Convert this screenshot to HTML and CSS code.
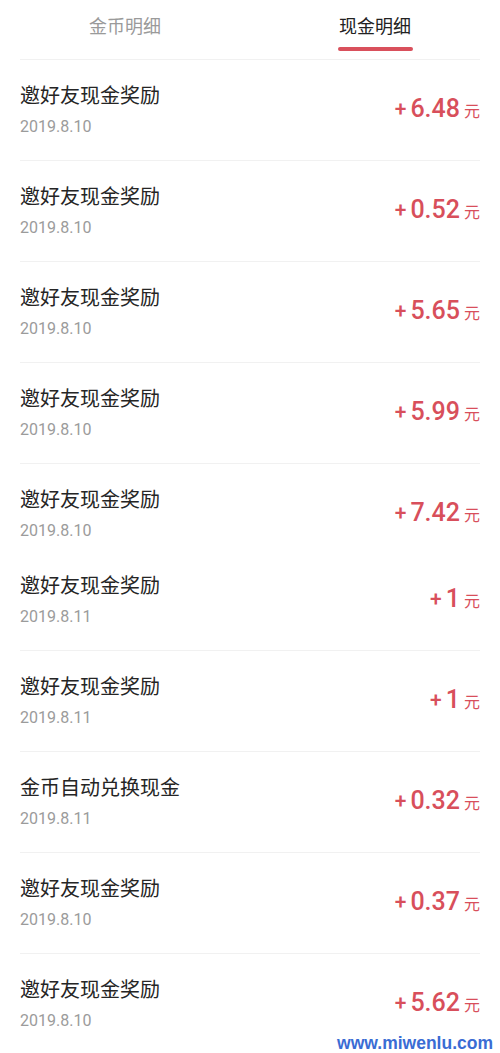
FILE: index.html
```html
<!DOCTYPE html>
<html lang="zh-CN">
<head>
  <meta charset="UTF-8" />
  <meta name="viewport" content="width=device-width, initial-scale=1.0" />
  <title>现金明细</title>
  <link rel="stylesheet" href="styles.css">
</head>
<body>
  <div class="tabs">
    <div class="tab">金币明细</div>
    <div class="tab active">现金明细</div>
  </div>

  <ul class="list">
    <li class="row">
      <div class="info">
        <div class="title">邀好友现金奖励</div>
        <div class="date">2019.8.10</div>
      </div>
      <div class="amount"><span class="plus">+</span>6.48<span class="unit">元</span></div>
    </li>
    <li class="row">
      <div class="info">
        <div class="title">邀好友现金奖励</div>
        <div class="date">2019.8.10</div>
      </div>
      <div class="amount"><span class="plus">+</span>0.52<span class="unit">元</span></div>
    </li>
    <li class="row">
      <div class="info">
        <div class="title">邀好友现金奖励</div>
        <div class="date">2019.8.10</div>
      </div>
      <div class="amount"><span class="plus">+</span>5.65<span class="unit">元</span></div>
    </li>
    <li class="row">
      <div class="info">
        <div class="title">邀好友现金奖励</div>
        <div class="date">2019.8.10</div>
      </div>
      <div class="amount"><span class="plus">+</span>5.99<span class="unit">元</span></div>
    </li>
    <li class="row short">
      <div class="info">
        <div class="title">邀好友现金奖励</div>
        <div class="date">2019.8.10</div>
      </div>
      <div class="amount"><span class="plus">+</span>7.42<span class="unit">元</span></div>
    </li>
    <li class="row">
      <div class="info">
        <div class="title">邀好友现金奖励</div>
        <div class="date">2019.8.11</div>
      </div>
      <div class="amount"><span class="plus">+</span>1<span class="unit">元</span></div>
    </li>
    <li class="row">
      <div class="info">
        <div class="title">邀好友现金奖励</div>
        <div class="date">2019.8.11</div>
      </div>
      <div class="amount"><span class="plus">+</span>1<span class="unit">元</span></div>
    </li>
    <li class="row">
      <div class="info">
        <div class="title">金币自动兑换现金</div>
        <div class="date">2019.8.11</div>
      </div>
      <div class="amount"><span class="plus">+</span>0.32<span class="unit">元</span></div>
    </li>
    <li class="row">
      <div class="info">
        <div class="title">邀好友现金奖励</div>
        <div class="date">2019.8.10</div>
      </div>
      <div class="amount"><span class="plus">+</span>0.37<span class="unit">元</span></div>
    </li>
    <li class="row">
      <div class="info">
        <div class="title">邀好友现金奖励</div>
        <div class="date">2019.8.10</div>
      </div>
      <div class="amount"><span class="plus">+</span>5.62<span class="unit">元</span></div>
    </li>
  </ul>

  <div class="watermark">www.miwenlu.com</div>
</body>
</html>
```

FILE: styles.css
```css
body {
  margin: 0;
  background-color: #fff;
  font-family: Roboto, "Noto Sans CJK SC", sans-serif;
  height: 1053px;
  overflow: hidden;
  position: relative;
}

.tabs {
  display: flex;
  height: 59px;
  margin: 0 20px;
  border-bottom: 1px solid #f1f1f1;
}

.tab {
  flex: 1;
  text-align: center;
  font-size: 18px;
  line-height: 26px;
  padding-top: 14px;
  color: #9a9a9a;
}

.tab.active {
  color: #222;
}

.tab.active::after {
  content: "";
  display: block;
  width: 75px;
  height: 4px;
  margin: 7px auto 0;
  border-radius: 2px;
  background-color: #d9505c;
}

.tabs .tab:first-child {
  margin-left: -20px;
}

.tabs .tab:last-child {
  margin-right: -20px;
}

.list {
  list-style: none;
  margin: 0;
  padding: 0 20px;
}

.row {
  display: flex;
  justify-content: space-between;
  padding: 22px 0 23px;
  border-bottom: 1px solid #f1f1f1;
}

.row.short {
  padding-bottom: 9px;
  border-bottom: none;
}

.title {
  font-size: 20px;
  line-height: 28px;
  color: #252525;
}

.date {
  margin-top: 7px;
  font-size: 16px;
  line-height: 20px;
  color: #9b9b9b;
}

.amount {
  margin-top: 12px;
  font-size: 25px;
  line-height: 30px;
  font-weight: 500;
  color: #d84f5b;
  white-space: nowrap;
}

.plus {
  font-size: 21px;
  margin-right: 4px;
  position: relative;
  top: -1px;
}

.unit {
  font-size: 16px;
  font-weight: 400;
  margin-left: 4px;
}

.watermark {
  position: absolute;
  right: 7px;
  bottom: 0;
  font-family: "Liberation Sans", Arial, sans-serif;
  font-weight: bold;
  font-size: 17.5px;
  line-height: 20px;
  color: #3a6cd4;
  text-shadow: 0 0 2px #fff;
}
```
